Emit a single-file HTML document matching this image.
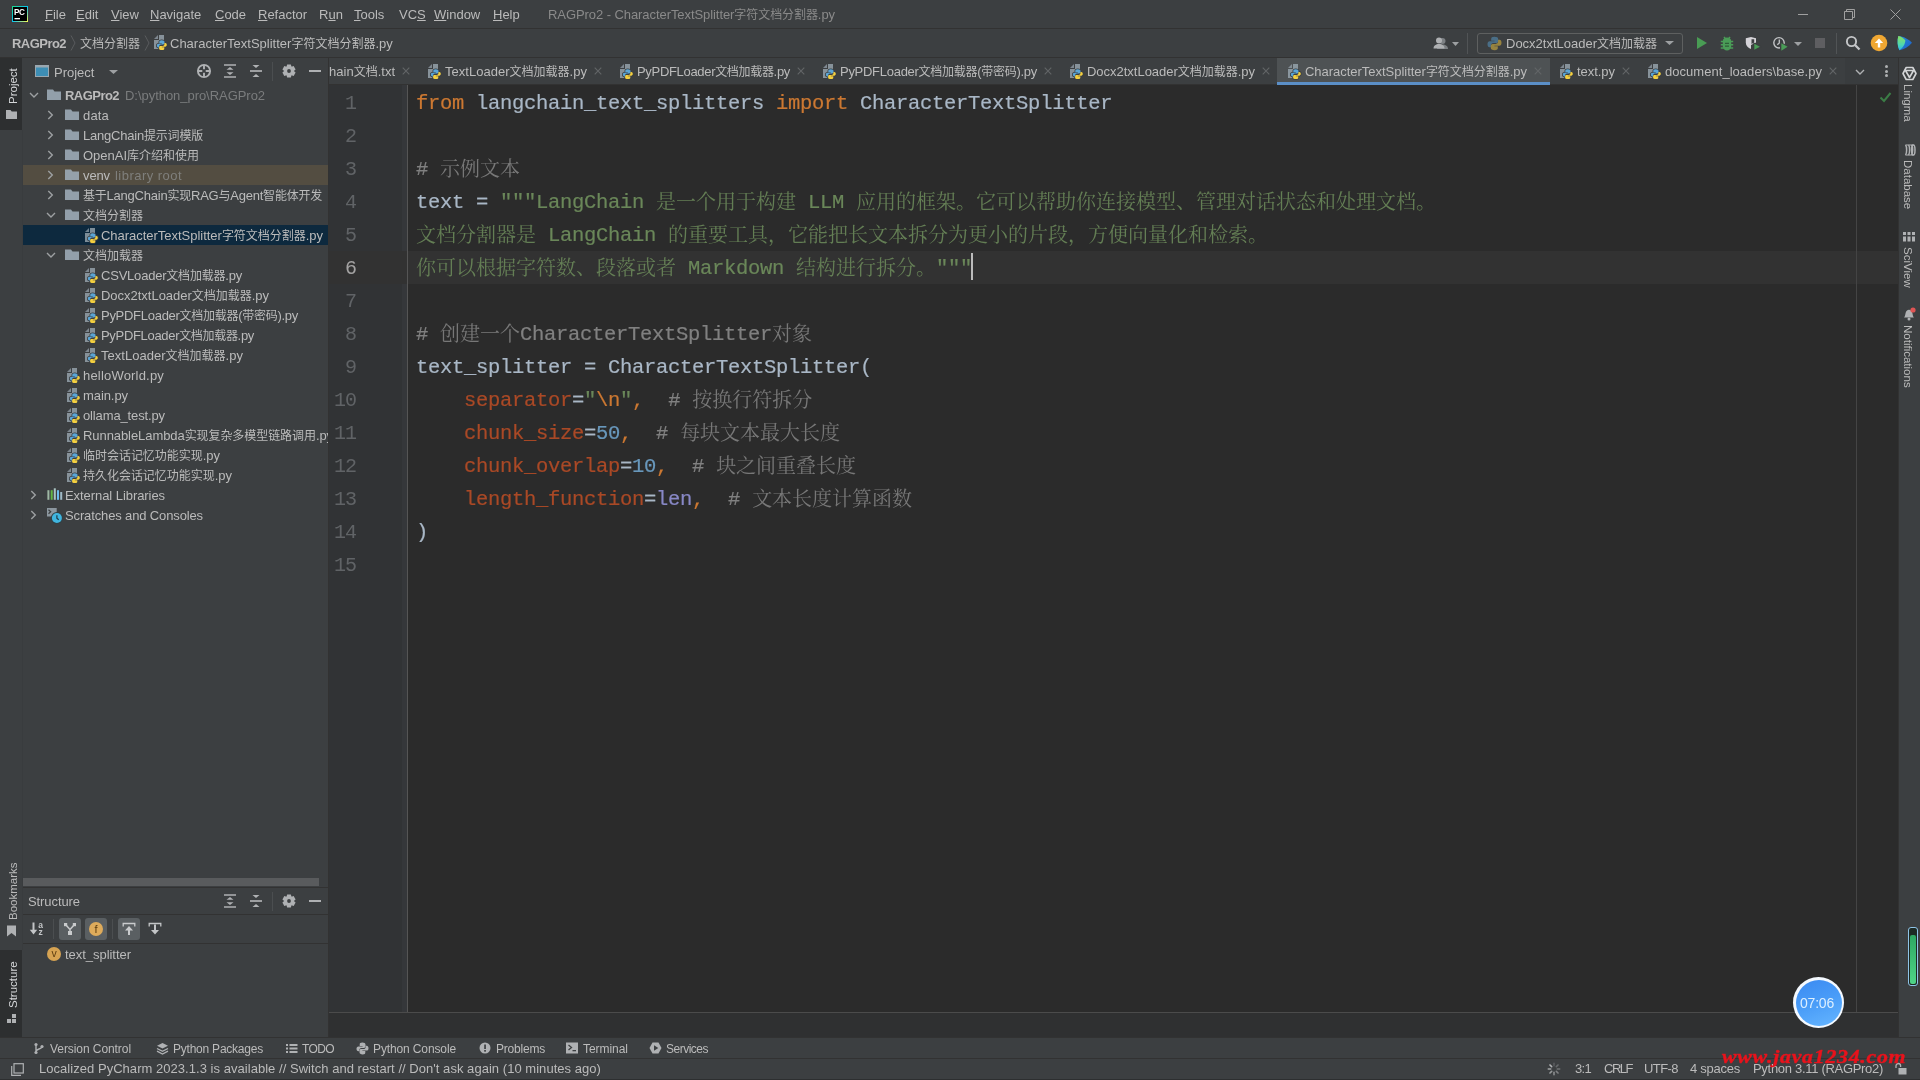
<!DOCTYPE html>
<html lang="zh"><head><meta charset="utf-8"><title>RAGPro2 - CharacterTextSplitter</title>
<style>
*{box-sizing:border-box;margin:0;padding:0}
html,body{width:1920px;height:1080px;overflow:hidden;background:#3c3f41}
body{position:relative;font-family:"Liberation Sans","Noto Sans CJK SC",sans-serif;font-size:13px;color:#bbbbbb}
#root{position:absolute;left:0;top:0;width:1920px;height:1080px;will-change:transform}
.r{position:absolute;display:block}
.t{position:absolute;white-space:pre;font-size:13px;color:#bbbbbb}
.c{font-size:12px}
.b{font-weight:bold}
.dim{color:#8a8a8a}
.code{position:absolute;white-space:pre;font-family:"Liberation Mono","Noto Serif CJK SC",monospace;font-size:20.5px;letter-spacing:-0.3px;height:33px;line-height:33px;color:#a9b7c6;left:416px;-webkit-text-stroke:0.2px}
.code .z{font-family:"Liberation Mono","Noto Serif CJK SC",monospace;font-size:20px;letter-spacing:0;line-height:0;-webkit-text-stroke:0;position:relative;top:1px;opacity:.9}
.ln{position:absolute;font-family:"Liberation Mono",monospace;font-size:20px;letter-spacing:-1px;height:33px;line-height:33px;color:#606366;width:27px;left:329px;text-align:right}
.k{color:#cc7832}.s{color:#6a8759}.cm{color:#808080}.n{color:#6897bb}.p{color:#aa4926}.bi{color:#8888c6}
.vt{position:absolute;white-space:pre;font-size:12px;color:#bbbbbb;height:16px;line-height:16px;transform-origin:0 0}
</style></head><body><div id="root">
<div class="r" style="left:0px;top:28px;width:1920px;height:1px;background:#323232;"></div>
<div class="r" style="left:0px;top:57px;width:1920px;height:1px;background:#323232;"></div>
<div class="r" style="left:0px;top:58px;width:22px;height:979px;background:#3c3f41;"></div>
<div class="r" style="left:22px;top:130px;width:1px;height:820px;background:#393c3e;"></div>
<div class="r" style="left:1898px;top:58px;width:1px;height:979px;background:#323232;"></div>
<div class="r" style="left:328px;top:58px;width:1px;height:979px;background:#323232;"></div>
<div class="r" style="left:329px;top:85px;width:1569px;height:927px;background:#2b2b2b;"></div>
<div class="r" style="left:329px;top:85px;width:78px;height:927px;background:#313335;"></div>
<div class="r" style="left:402px;top:85px;width:5px;height:927px;background:#35373a;"></div>
<div class="r" style="left:407px;top:85px;width:1px;height:927px;background:#555555;"></div>
<div class="r" style="left:329px;top:251px;width:1569px;height:33px;background:#323232;"></div>
<div class="r" style="left:407px;top:251px;width:1px;height:33px;background:#555555;"></div>
<div class="r" style="left:1856px;top:85px;width:1px;height:927px;background:#444444;"></div>
<div class="r" style="left:329px;top:84px;width:1569px;height:1px;background:#323232;"></div>
<div class="r" style="left:329px;top:1012px;width:1569px;height:25px;background:#2f3031;"></div>
<div class="r" style="left:329px;top:1012px;width:1569px;height:1px;background:#4b4b4b;"></div>
<div class="r" style="left:0px;top:1037px;width:1920px;height:1px;background:#323232;"></div>
<div class="r" style="left:0px;top:1058px;width:1920px;height:1px;background:#323232;"></div>
<div class="ln" style="top:87px">1</div>
<div class="ln" style="top:120px">2</div>
<div class="ln" style="top:153px">3</div>
<div class="ln" style="top:186px">4</div>
<div class="ln" style="top:219px">5</div>
<div class="ln" style="top:252px;color:#a4a3a3">6</div>
<div class="ln" style="top:285px">7</div>
<div class="ln" style="top:318px">8</div>
<div class="ln" style="top:351px">9</div>
<div class="ln" style="top:384px">10</div>
<div class="ln" style="top:417px">11</div>
<div class="ln" style="top:450px">12</div>
<div class="ln" style="top:483px">13</div>
<div class="ln" style="top:516px">14</div>
<div class="ln" style="top:549px">15</div>
<div class="code" style="top:87px"><span class="k">from</span> langchain_text_splitters <span class="k">import</span> CharacterTextSplitter</div>
<div class="code" style="top:153px"><span class="cm"># <span class="z">示例文本</span></span></div>
<div class="code" style="top:186px">text = <span class="s">"""LangChain <span class="z">是一个用于构建</span> LLM <span class="z">应用的框架。它可以帮助你连接模型、管理对话状态和处理文档。</span></span></div>
<div class="code" style="top:219px"><span class="s"><span class="z">文档分割器是</span> LangChain <span class="z">的重要工具，它能把长文本拆分为更小的片段，方便向量化和检索。</span></span></div>
<div class="code" style="top:252px"><span class="s"><span class="z">你可以根据字符数、段落或者</span> Markdown <span class="z">结构进行拆分。</span>"""</span></div>
<div class="code" style="top:318px"><span class="cm"># <span class="z">创建一个</span>CharacterTextSplitter<span class="z">对象</span></span></div>
<div class="code" style="top:351px">text_splitter = CharacterTextSplitter(</div>
<div class="code" style="top:384px">    <span class="p">separator</span>=<span class="s">"</span><span class="k">\n</span><span class="s">"</span><span class="k">,</span>  <span class="cm"># <span class="z">按换行符拆分</span></span></div>
<div class="code" style="top:417px">    <span class="p">chunk_size</span>=<span class="n">50</span><span class="k">,</span>  <span class="cm"># <span class="z">每块文本最大长度</span></span></div>
<div class="code" style="top:450px">    <span class="p">chunk_overlap</span>=<span class="n">10</span><span class="k">,</span>  <span class="cm"># <span class="z">块之间重叠长度</span></span></div>
<div class="code" style="top:483px">    <span class="p">length_function</span>=<span class="bi">len</span><span class="k">,</span>  <span class="cm"># <span class="z">文本长度计算函数</span></span></div>
<div class="code" style="top:516px">)</div>
<div class="r" style="left:971px;top:253px;width:2px;height:27px;background:#bbbbbb;"></div>
<svg class="r" style="left:12px;top:6px;" width="16" height="16" viewBox="0 0 16 16"><defs><linearGradient id="pcg" x1="0" y1="0" x2="1" y2="1"><stop offset="0" stop-color="#21d789"/><stop offset=".5" stop-color="#07c3f2"/><stop offset="1" stop-color="#fcf84a"/></linearGradient></defs><rect width="16" height="16" fill="url(#pcg)"/><rect x="1" y="1" width="14" height="14" fill="#000"/><text x="2" y="8.800" font-family="Liberation Sans,sans-serif" font-weight="bold" font-size="8.200" fill="#fff" letter-spacing="-.4">PC</text><rect x="2.500" y="12" width="5.500" height="1.300" fill="#fff"/></svg>
<div class="t " style="left:45px;top:5px;height:20px;line-height:20px;"><u>F</u>ile</div>
<div class="t " style="left:76px;top:5px;height:20px;line-height:20px;"><u>E</u>dit</div>
<div class="t " style="left:111px;top:5px;height:20px;line-height:20px;"><u>V</u>iew</div>
<div class="t " style="left:150px;top:5px;height:20px;line-height:20px;"><u>N</u>avigate</div>
<div class="t " style="left:215px;top:5px;height:20px;line-height:20px;"><u>C</u>ode</div>
<div class="t " style="left:258px;top:5px;height:20px;line-height:20px;"><u>R</u>efactor</div>
<div class="t " style="left:319px;top:5px;height:20px;line-height:20px;">R<u>u</u>n</div>
<div class="t " style="left:354px;top:5px;height:20px;line-height:20px;"><u>T</u>ools</div>
<div class="t " style="left:399px;top:5px;height:20px;line-height:20px;">VC<u>S</u></div>
<div class="t " style="left:434px;top:5px;height:20px;line-height:20px;"><u>W</u>indow</div>
<div class="t " style="left:493px;top:5px;height:20px;line-height:20px;"><u>H</u>elp</div>
<div class="t dim" style="left:548px;top:5px;height:20px;line-height:20px;letter-spacing:-0.072px;">RAGPro2 - CharacterTextSplitter<span class="c">字符文档分割器</span>.py</div>
<div class="r" style="left:1798px;top:14px;width:10px;height:1px;background:#a0a0a0;"></div>
<svg class="r" style="left:1844px;top:9px;" width="11" height="11" viewBox="0 0 11 11"><path d="M.5 2.500h8v8h-8z M2.500 2.500v-2h8v8h-2" fill="none" stroke="#a0a0a0" stroke-width="1"/></svg>
<svg class="r" style="left:1890px;top:9px;" width="11" height="11" viewBox="0 0 11 11"><path d="M.5.5l10 10M10.500.5l-10 10" fill="none" stroke="#a0a0a0" stroke-width="1"/></svg>
<div class="t b" style="left:12px;top:34px;height:20px;line-height:20px;letter-spacing:-0.542px;">RAGPro2</div>
<svg class="r" style="left:70px;top:35px;" width="6" height="16" viewBox="0 0 6 16"><path d="M1 .5L5 8 1 15.500" fill="none" stroke="#595c5e" stroke-width="1"/></svg>
<div class="t " style="left:80px;top:34px;height:20px;line-height:20px;"><span class="c">文档分割器</span></div>
<svg class="r" style="left:144px;top:35px;" width="6" height="16" viewBox="0 0 6 16"><path d="M1 .5L5 8 1 15.500" fill="none" stroke="#595c5e" stroke-width="1"/></svg>
<svg class="r" style="left:151px;top:34px;" width="17" height="17" viewBox="0 0 17 17"><path d="M7 1L3 5h4z" fill="#9aa7b0" opacity=".7"/><path d="M8 1v5H3v9h10V1z" fill="#9aa7b0" opacity=".8"/><circle cx="11" cy="11.200" r="5.600" fill="#3c3f41" opacity=".0"/><g transform="translate(5.800,6.200)"><path d="M4.900.1C3.100.1 2.500.8 2.500 1.800V3H5v.5H1.600C.6 3.500 0 4.300 0 5.400s.6 1.900 1.500 1.900h.9V6c0-.9.8-1.700 1.700-1.700h2.200c.8 0 1.400-.6 1.400-1.400V1.800C7.700.8 6.700.1 4.900.1z" fill="#3c3f41" stroke="#3c3f41" stroke-width="1.600"/><path d="M4.900.1C3.100.1 2.500.8 2.500 1.800V3H5v.5H1.600C.6 3.500 0 4.300 0 5.400s.6 1.900 1.500 1.900h.9V6c0-.9.8-1.700 1.700-1.700h2.200c.8 0 1.400-.6 1.400-1.400V1.800C7.700.8 6.700.1 4.900.1z" transform="rotate(180 5 5)" fill="#3c3f41" stroke="#3c3f41" stroke-width="1.600"/><path d="M4.900.1C3.100.1 2.500.8 2.500 1.800V3H5v.5H1.600C.6 3.500 0 4.300 0 5.400s.6 1.900 1.500 1.900h.9V6c0-.9.8-1.700 1.700-1.700h2.200c.8 0 1.400-.6 1.400-1.400V1.800C7.700.8 6.700.1 4.900.1z" fill="#5aa5d6"/><path d="M4.900.1C3.100.1 2.500.8 2.500 1.800V3H5v.5H1.600C.6 3.500 0 4.300 0 5.400s.6 1.900 1.500 1.900h.9V6c0-.9.8-1.700 1.700-1.700h2.200c.8 0 1.400-.6 1.400-1.400V1.800C7.700.8 6.700.1 4.900.1z" transform="rotate(180 5 5)" fill="#f4d03f"/></g></svg>
<div class="t " style="left:170px;top:34px;height:20px;line-height:20px;">CharacterTextSplitter<span class="c">字符文档分割器</span>.py</div>
<svg class="r" style="left:1433px;top:36px;" width="16" height="16" viewBox="0 0 16 16"><circle cx="9.500" cy="5" r="3" fill="#7d8184"/><path d="M4 13c0-3 2.500-4.500 5.500-4.500S15 10 15 13z" fill="#7d8184"/><circle cx="6" cy="4.500" r="3" fill="#afb1b3"/><path d="M.5 12.500c0-3 2.500-4.500 5.500-4.500s5.500 1.500 5.500 4.500z" fill="#afb1b3"/></svg>
<svg class="r" style="left:1451.5px;top:42px;" width="7" height="4" viewBox="0 0 7 4"><path d="M0 0h7l-3.5 4z" fill="#9da0a2"/></svg>
<div class="r" style="left:1467px;top:33px;width:1px;height:21px;background:#515456;"></div>
<div class="r" style="left:1477px;top:33px;width:206px;height:21px;border:1px solid #5e6060;border-radius:3px;background:#3c3f41"></div>
<svg class="r" style="left:1487px;top:36px;" width="15" height="15" viewBox="0 0 15 15"><path d="M7.300.8C5 .8 4.200 1.600 4.200 3v1.700h3.400v.6H2.700C1.300 5.300.5 6.400.5 8.200s.8 3 2.100 3h1.300V9.400c0-1.300 1.100-2.300 2.400-2.300h3c1.100 0 1.900-.8 1.900-1.900V3c0-1.300-1.300-2.200-3.900-2.200z" fill="#4f7f9f" opacity=".75"/><path d="M7.700 14.200c2.300 0 3.100-.8 3.100-2.200v-1.700H7.400v-.6h4.900c1.400 0 2.200-1.100 2.200-2.900s-.8-3-2.100-3h-1.300v1.800c0 1.300-1.100 2.300-2.400 2.300h-3c-1.100 0-1.900.8-1.900 1.900V12c0 1.300 1.300 2.200 3.900 2.200z" fill="#b59b3f" opacity=".75"/></svg>
<div class="t " style="left:1506px;top:34px;height:20px;line-height:20px;">Docx2txtLoader<span class="c">文档加载器</span></div>
<svg class="r" style="left:1664.5px;top:41px;" width="9" height="4" viewBox="0 0 9 4"><path d="M0 0h9l-4.5 4z" fill="#9da0a2"/></svg>
<svg class="r" style="left:1695px;top:36px;" width="14" height="14" viewBox="0 0 14 14"><path d="M2 1l10 6-10 6z" fill="#499c54"/></svg>
<svg class="r" style="left:1719px;top:35px;" width="16" height="16" viewBox="0 0 16 16"><path d="M5 2l1.800 2.200M11 2L9.200 4.200" stroke="#4a9c57" stroke-width="1.500" fill="none"/><path d="M1.800 6.500h12.400M1.800 9.800h12.400M1.800 13h12.400" stroke="#4a9c57" stroke-width="1.600" fill="none"/><path d="M3.800 6.200c0-2.400 1.900-3.700 4.200-3.700s4.200 1.300 4.200 3.700v5.300c0 2.300-1.900 4-4.200 4s-4.200-1.700-4.200-4z" fill="#4a9c57"/><path d="M6 8.300h4M6 11.200h4" stroke="#2f5f38" stroke-width="1.300"/></svg>
<svg class="r" style="left:1745px;top:35px;" width="18" height="18" viewBox="0 0 18 18"><path d="M.8 3.200L6 2v12C3 13 .8 10.800.8 7.500z" fill="#d5d3d8"/><path d="M6 2l5 1.200v4.300L6 10z" fill="#d5d3d8"/><path d="M6.500 4.200h2.700v3.300L6.500 9z" fill="#3c3f41"/><path d="M8.300 7.200l8.300 4.500-8.300 4.600z" fill="#3c3f41"/><path d="M9.300 8.800l5.600 2.900-5.600 3z" fill="#4a9c57"/></svg>
<svg class="r" style="left:1771px;top:35px;" width="18" height="18" viewBox="0 0 18 18"><circle cx="8" cy="7.800" r="5.200" fill="none" stroke="#c4c6c8" stroke-width="1.400"/><path d="M8.300 4.500v3.500l-2 1.800" fill="none" stroke="#c4c6c8" stroke-width="1.300"/><path d="M9 6.500l9 5-9 5.500z" fill="#3c3f41"/><path d="M10.300 8.300l6.300 3.500-6.300 3.900z" fill="#4a9c57"/></svg>
<svg class="r" style="left:1794.0px;top:42px;" width="8" height="4" viewBox="0 0 8 4"><path d="M0 0h8l-4.0 4z" fill="#9da0a2"/></svg>
<div class="r" style="left:1815px;top:38px;width:10px;height:10px;background:#5e5e61;"></div>
<div class="r" style="left:1836px;top:33px;width:1px;height:21px;background:#515456;"></div>
<svg class="r" style="left:1845px;top:35px;" width="16" height="16" viewBox="0 0 16 16"><circle cx="6.500" cy="6.500" r="4.600" fill="none" stroke="#c4c6c8" stroke-width="1.900"/><path d="M10 10l4.500 4.500" stroke="#c4c6c8" stroke-width="2.300"/></svg>
<svg class="r" style="left:1870px;top:34px;" width="18" height="18" viewBox="0 0 18 18"><circle cx="9" cy="9" r="8.300" fill="#f0a732"/><path d="M9 13.500V8" fill="none" stroke="#fff" stroke-width="2.400"/><path d="M4.800 9L9 4.500 13.200 9z" fill="#fff"/></svg>
<svg class="r" style="left:1896px;top:34px;" width="18" height="18" viewBox="0 0 18 18"><defs><linearGradient id="lg1" x1="0" y1="0" x2="1" y2="1"><stop offset="0" stop-color="#2a8fd8"/><stop offset="1" stop-color="#1b5fc9"/></linearGradient><linearGradient id="lg2" x1="0" y1="0" x2="0" y2="1"><stop offset="0" stop-color="#8be05a"/><stop offset=".6" stop-color="#4fd8b0"/><stop offset="1" stop-color="#2fb5e8"/></linearGradient></defs><path d="M2.300 1.900c5 .3 10.500 3.300 13.700 6.900-3.200 4-8 6.800-12.600 7.400C1.300 12 1.100 6.500 2.300 1.900z" fill="url(#lg1)"/><path d="M2.300 1.900C1.100 6.500 1.300 12 3.400 16.200c3.600-2.400 5.900-6.300 5.900-10-2-2.400-4.400-3.900-7-4.300z" fill="url(#lg2)"/></svg>
<div class="r" style="left:1277px;top:58px;width:273px;height:27px;background:#4e5254;"></div>
<div class="r" style="left:1277px;top:82px;width:273px;height:3px;background:#5b8fc7;"></div>
<div class="r" style="left:329px;top:58px;width:90px;height:26px;overflow:hidden"><div class="t" style="right:24px;top:4px;height:20px;line-height:20px">LangChain<span class="c">文档</span>.txt</div></div>
<svg class="r" style="left:402px;top:67px;" width="8" height="8" viewBox="0 0 8 8"><path d="M.7.7l6.600 6.600M7.300.7L.7 7.300" stroke="#626567" stroke-width="1.100" fill="none"/></svg>
<svg class="r" style="left:425px;top:63px;" width="17" height="17" viewBox="0 0 17 17"><path d="M7 1L3 5h4z" fill="#9aa7b0" opacity=".7"/><path d="M8 1v5H3v9h10V1z" fill="#9aa7b0" opacity=".8"/><circle cx="11" cy="11.200" r="5.600" fill="#3c3f41" opacity=".0"/><g transform="translate(5.800,6.200)"><path d="M4.900.1C3.100.1 2.500.8 2.500 1.800V3H5v.5H1.600C.6 3.500 0 4.300 0 5.400s.6 1.900 1.500 1.900h.9V6c0-.9.8-1.700 1.700-1.700h2.200c.8 0 1.400-.6 1.400-1.400V1.800C7.700.8 6.700.1 4.900.1z" fill="#3c3f41" stroke="#3c3f41" stroke-width="1.600"/><path d="M4.900.1C3.100.1 2.500.8 2.500 1.800V3H5v.5H1.600C.6 3.500 0 4.300 0 5.400s.6 1.900 1.500 1.900h.9V6c0-.9.8-1.700 1.700-1.700h2.200c.8 0 1.400-.6 1.400-1.400V1.800C7.700.8 6.700.1 4.900.1z" transform="rotate(180 5 5)" fill="#3c3f41" stroke="#3c3f41" stroke-width="1.600"/><path d="M4.900.1C3.100.1 2.500.8 2.500 1.800V3H5v.5H1.600C.6 3.500 0 4.300 0 5.400s.6 1.900 1.500 1.900h.9V6c0-.9.8-1.700 1.700-1.700h2.200c.8 0 1.400-.6 1.400-1.400V1.800C7.700.8 6.700.1 4.900.1z" fill="#5aa5d6"/><path d="M4.900.1C3.100.1 2.500.8 2.500 1.800V3H5v.5H1.600C.6 3.500 0 4.300 0 5.400s.6 1.900 1.500 1.900h.9V6c0-.9.8-1.700 1.700-1.700h2.200c.8 0 1.400-.6 1.400-1.400V1.800C7.700.8 6.700.1 4.900.1z" transform="rotate(180 5 5)" fill="#f4d03f"/></g></svg>
<div class="t " style="left:445px;top:62px;height:20px;line-height:20px;letter-spacing:0.017px;">TextLoader<span class="c">文档加载器</span>.py</div>
<svg class="r" style="left:594px;top:67px;" width="8" height="8" viewBox="0 0 8 8"><path d="M.7.7l6.600 6.600M7.300.7L.7 7.300" stroke="#626567" stroke-width="1.100" fill="none"/></svg>
<svg class="r" style="left:617px;top:63px;" width="17" height="17" viewBox="0 0 17 17"><path d="M7 1L3 5h4z" fill="#9aa7b0" opacity=".7"/><path d="M8 1v5H3v9h10V1z" fill="#9aa7b0" opacity=".8"/><circle cx="11" cy="11.200" r="5.600" fill="#3c3f41" opacity=".0"/><g transform="translate(5.800,6.200)"><path d="M4.900.1C3.100.1 2.500.8 2.500 1.800V3H5v.5H1.600C.6 3.500 0 4.300 0 5.400s.6 1.900 1.500 1.900h.9V6c0-.9.8-1.700 1.700-1.700h2.200c.8 0 1.400-.6 1.400-1.400V1.800C7.700.8 6.700.1 4.900.1z" fill="#3c3f41" stroke="#3c3f41" stroke-width="1.600"/><path d="M4.900.1C3.100.1 2.500.8 2.500 1.800V3H5v.5H1.600C.6 3.500 0 4.300 0 5.400s.6 1.900 1.500 1.900h.9V6c0-.9.8-1.700 1.700-1.700h2.200c.8 0 1.400-.6 1.400-1.400V1.800C7.700.8 6.700.1 4.900.1z" transform="rotate(180 5 5)" fill="#3c3f41" stroke="#3c3f41" stroke-width="1.600"/><path d="M4.900.1C3.100.1 2.500.8 2.500 1.800V3H5v.5H1.600C.6 3.500 0 4.300 0 5.400s.6 1.900 1.500 1.900h.9V6c0-.9.8-1.700 1.700-1.700h2.200c.8 0 1.400-.6 1.400-1.400V1.800C7.700.8 6.700.1 4.900.1z" fill="#5aa5d6"/><path d="M4.900.1C3.100.1 2.500.8 2.500 1.800V3H5v.5H1.600C.6 3.500 0 4.300 0 5.400s.6 1.900 1.500 1.900h.9V6c0-.9.8-1.700 1.700-1.700h2.200c.8 0 1.400-.6 1.400-1.400V1.800C7.700.8 6.700.1 4.900.1z" transform="rotate(180 5 5)" fill="#f4d03f"/></g></svg>
<div class="t " style="left:637px;top:62px;height:20px;line-height:20px;letter-spacing:-0.317px;">PyPDFLoader<span class="c">文档加载器</span>.py</div>
<svg class="r" style="left:797px;top:67px;" width="8" height="8" viewBox="0 0 8 8"><path d="M.7.7l6.600 6.600M7.300.7L.7 7.300" stroke="#626567" stroke-width="1.100" fill="none"/></svg>
<svg class="r" style="left:820px;top:63px;" width="17" height="17" viewBox="0 0 17 17"><path d="M7 1L3 5h4z" fill="#9aa7b0" opacity=".7"/><path d="M8 1v5H3v9h10V1z" fill="#9aa7b0" opacity=".8"/><circle cx="11" cy="11.200" r="5.600" fill="#3c3f41" opacity=".0"/><g transform="translate(5.800,6.200)"><path d="M4.900.1C3.100.1 2.500.8 2.500 1.800V3H5v.5H1.600C.6 3.500 0 4.300 0 5.400s.6 1.900 1.500 1.900h.9V6c0-.9.8-1.700 1.700-1.700h2.200c.8 0 1.400-.6 1.400-1.400V1.800C7.700.8 6.700.1 4.900.1z" fill="#3c3f41" stroke="#3c3f41" stroke-width="1.600"/><path d="M4.900.1C3.100.1 2.500.8 2.500 1.800V3H5v.5H1.600C.6 3.500 0 4.300 0 5.400s.6 1.900 1.500 1.900h.9V6c0-.9.8-1.700 1.700-1.700h2.200c.8 0 1.400-.6 1.400-1.400V1.800C7.700.8 6.700.1 4.900.1z" transform="rotate(180 5 5)" fill="#3c3f41" stroke="#3c3f41" stroke-width="1.600"/><path d="M4.900.1C3.100.1 2.500.8 2.500 1.800V3H5v.5H1.600C.6 3.500 0 4.300 0 5.400s.6 1.900 1.500 1.900h.9V6c0-.9.8-1.700 1.700-1.700h2.200c.8 0 1.400-.6 1.400-1.400V1.800C7.700.8 6.700.1 4.900.1z" fill="#5aa5d6"/><path d="M4.900.1C3.100.1 2.500.8 2.500 1.800V3H5v.5H1.600C.6 3.500 0 4.300 0 5.400s.6 1.900 1.500 1.900h.9V6c0-.9.8-1.700 1.700-1.700h2.200c.8 0 1.400-.6 1.400-1.400V1.800C7.700.8 6.700.1 4.900.1z" transform="rotate(180 5 5)" fill="#f4d03f"/></g></svg>
<div class="t " style="left:840px;top:62px;height:20px;line-height:20px;letter-spacing:-0.279px;">PyPDFLoader<span class="c">文档加载器</span>(<span class="c">带密码</span>).py</div>
<svg class="r" style="left:1044px;top:67px;" width="8" height="8" viewBox="0 0 8 8"><path d="M.7.7l6.600 6.600M7.300.7L.7 7.300" stroke="#626567" stroke-width="1.100" fill="none"/></svg>
<svg class="r" style="left:1067px;top:63px;" width="17" height="17" viewBox="0 0 17 17"><path d="M7 1L3 5h4z" fill="#9aa7b0" opacity=".7"/><path d="M8 1v5H3v9h10V1z" fill="#9aa7b0" opacity=".8"/><circle cx="11" cy="11.200" r="5.600" fill="#3c3f41" opacity=".0"/><g transform="translate(5.800,6.200)"><path d="M4.900.1C3.100.1 2.500.8 2.500 1.800V3H5v.5H1.600C.6 3.500 0 4.300 0 5.400s.6 1.900 1.500 1.900h.9V6c0-.9.8-1.700 1.700-1.700h2.200c.8 0 1.400-.6 1.400-1.400V1.800C7.700.8 6.700.1 4.900.1z" fill="#3c3f41" stroke="#3c3f41" stroke-width="1.600"/><path d="M4.900.1C3.100.1 2.500.8 2.500 1.800V3H5v.5H1.600C.6 3.500 0 4.300 0 5.400s.6 1.900 1.500 1.900h.9V6c0-.9.8-1.700 1.700-1.700h2.200c.8 0 1.400-.6 1.400-1.400V1.800C7.700.8 6.700.1 4.900.1z" transform="rotate(180 5 5)" fill="#3c3f41" stroke="#3c3f41" stroke-width="1.600"/><path d="M4.900.1C3.100.1 2.500.8 2.500 1.800V3H5v.5H1.600C.6 3.500 0 4.300 0 5.400s.6 1.900 1.500 1.900h.9V6c0-.9.8-1.700 1.700-1.700h2.200c.8 0 1.400-.6 1.400-1.400V1.800C7.700.8 6.700.1 4.900.1z" fill="#5aa5d6"/><path d="M4.900.1C3.100.1 2.500.8 2.500 1.800V3H5v.5H1.600C.6 3.500 0 4.300 0 5.400s.6 1.900 1.500 1.900h.9V6c0-.9.8-1.700 1.700-1.700h2.200c.8 0 1.400-.6 1.400-1.400V1.800C7.700.8 6.700.1 4.900.1z" transform="rotate(180 5 5)" fill="#f4d03f"/></g></svg>
<div class="t " style="left:1087px;top:62px;height:20px;line-height:20px;letter-spacing:-0.019px;">Docx2txtLoader<span class="c">文档加载器</span>.py</div>
<svg class="r" style="left:1262px;top:67px;" width="8" height="8" viewBox="0 0 8 8"><path d="M.7.7l6.600 6.600M7.300.7L.7 7.300" stroke="#626567" stroke-width="1.100" fill="none"/></svg>
<svg class="r" style="left:1285px;top:63px;" width="17" height="17" viewBox="0 0 17 17"><path d="M7 1L3 5h4z" fill="#9aa7b0" opacity=".7"/><path d="M8 1v5H3v9h10V1z" fill="#9aa7b0" opacity=".8"/><circle cx="11" cy="11.200" r="5.600" fill="#3c3f41" opacity=".0"/><g transform="translate(5.800,6.200)"><path d="M4.900.1C3.100.1 2.500.8 2.500 1.800V3H5v.5H1.600C.6 3.500 0 4.300 0 5.400s.6 1.900 1.500 1.900h.9V6c0-.9.8-1.700 1.700-1.700h2.200c.8 0 1.400-.6 1.400-1.400V1.800C7.700.8 6.700.1 4.900.1z" fill="#3c3f41" stroke="#3c3f41" stroke-width="1.600"/><path d="M4.900.1C3.100.1 2.500.8 2.500 1.800V3H5v.5H1.600C.6 3.500 0 4.300 0 5.400s.6 1.900 1.500 1.900h.9V6c0-.9.8-1.700 1.700-1.700h2.200c.8 0 1.400-.6 1.400-1.400V1.800C7.700.8 6.700.1 4.900.1z" transform="rotate(180 5 5)" fill="#3c3f41" stroke="#3c3f41" stroke-width="1.600"/><path d="M4.900.1C3.100.1 2.500.8 2.500 1.800V3H5v.5H1.600C.6 3.500 0 4.300 0 5.400s.6 1.900 1.500 1.900h.9V6c0-.9.8-1.700 1.700-1.700h2.200c.8 0 1.400-.6 1.400-1.400V1.800C7.700.8 6.700.1 4.900.1z" fill="#5aa5d6"/><path d="M4.900.1C3.100.1 2.500.8 2.500 1.800V3H5v.5H1.600C.6 3.500 0 4.300 0 5.400s.6 1.900 1.500 1.900h.9V6c0-.9.8-1.700 1.700-1.700h2.200c.8 0 1.400-.6 1.400-1.400V1.800C7.700.8 6.700.1 4.900.1z" transform="rotate(180 5 5)" fill="#f4d03f"/></g></svg>
<div class="t " style="left:1305px;top:62px;height:20px;line-height:20px;letter-spacing:-0.024px;">CharacterTextSplitter<span class="c">字符文档分割器</span>.py</div>
<svg class="r" style="left:1534px;top:67px;" width="8" height="8" viewBox="0 0 8 8"><path d="M.7.7l6.600 6.600M7.300.7L.7 7.300" stroke="#626567" stroke-width="1.100" fill="none"/></svg>
<svg class="r" style="left:1557px;top:63px;" width="17" height="17" viewBox="0 0 17 17"><path d="M7 1L3 5h4z" fill="#9aa7b0" opacity=".7"/><path d="M8 1v5H3v9h10V1z" fill="#9aa7b0" opacity=".8"/><circle cx="11" cy="11.200" r="5.600" fill="#3c3f41" opacity=".0"/><g transform="translate(5.800,6.200)"><path d="M4.900.1C3.100.1 2.500.8 2.500 1.800V3H5v.5H1.600C.6 3.500 0 4.300 0 5.400s.6 1.900 1.500 1.900h.9V6c0-.9.8-1.700 1.700-1.700h2.200c.8 0 1.400-.6 1.400-1.400V1.800C7.700.8 6.700.1 4.900.1z" fill="#3c3f41" stroke="#3c3f41" stroke-width="1.600"/><path d="M4.900.1C3.100.1 2.500.8 2.500 1.800V3H5v.5H1.600C.6 3.500 0 4.300 0 5.400s.6 1.900 1.500 1.900h.9V6c0-.9.8-1.700 1.700-1.700h2.200c.8 0 1.400-.6 1.400-1.400V1.800C7.700.8 6.700.1 4.900.1z" transform="rotate(180 5 5)" fill="#3c3f41" stroke="#3c3f41" stroke-width="1.600"/><path d="M4.900.1C3.100.1 2.500.8 2.500 1.800V3H5v.5H1.600C.6 3.500 0 4.300 0 5.400s.6 1.900 1.500 1.900h.9V6c0-.9.8-1.700 1.700-1.700h2.200c.8 0 1.400-.6 1.400-1.400V1.800C7.700.8 6.700.1 4.900.1z" fill="#5aa5d6"/><path d="M4.900.1C3.100.1 2.500.8 2.500 1.800V3H5v.5H1.600C.6 3.500 0 4.300 0 5.400s.6 1.900 1.500 1.900h.9V6c0-.9.8-1.700 1.700-1.700h2.200c.8 0 1.400-.6 1.400-1.400V1.800C7.700.8 6.700.1 4.900.1z" transform="rotate(180 5 5)" fill="#f4d03f"/></g></svg>
<div class="t " style="left:1577px;top:62px;height:20px;line-height:20px;letter-spacing:-0.042px;">text.py</div>
<svg class="r" style="left:1622px;top:67px;" width="8" height="8" viewBox="0 0 8 8"><path d="M.7.7l6.600 6.600M7.300.7L.7 7.300" stroke="#626567" stroke-width="1.100" fill="none"/></svg>
<svg class="r" style="left:1645px;top:63px;" width="17" height="17" viewBox="0 0 17 17"><path d="M7 1L3 5h4z" fill="#9aa7b0" opacity=".7"/><path d="M8 1v5H3v9h10V1z" fill="#9aa7b0" opacity=".8"/><circle cx="11" cy="11.200" r="5.600" fill="#3c3f41" opacity=".0"/><g transform="translate(5.800,6.200)"><path d="M4.900.1C3.100.1 2.500.8 2.500 1.800V3H5v.5H1.600C.6 3.500 0 4.300 0 5.400s.6 1.900 1.500 1.900h.9V6c0-.9.8-1.700 1.700-1.700h2.200c.8 0 1.400-.6 1.400-1.400V1.800C7.700.8 6.700.1 4.900.1z" fill="#3c3f41" stroke="#3c3f41" stroke-width="1.600"/><path d="M4.900.1C3.100.1 2.500.8 2.500 1.800V3H5v.5H1.600C.6 3.500 0 4.300 0 5.400s.6 1.900 1.500 1.900h.9V6c0-.9.8-1.700 1.700-1.700h2.200c.8 0 1.400-.6 1.400-1.400V1.800C7.700.8 6.700.1 4.900.1z" transform="rotate(180 5 5)" fill="#3c3f41" stroke="#3c3f41" stroke-width="1.600"/><path d="M4.900.1C3.100.1 2.500.8 2.500 1.800V3H5v.5H1.600C.6 3.500 0 4.300 0 5.400s.6 1.900 1.500 1.900h.9V6c0-.9.8-1.700 1.700-1.700h2.200c.8 0 1.400-.6 1.400-1.400V1.800C7.700.8 6.700.1 4.900.1z" fill="#5aa5d6"/><path d="M4.900.1C3.100.1 2.500.8 2.500 1.800V3H5v.5H1.600C.6 3.500 0 4.300 0 5.400s.6 1.900 1.500 1.900h.9V6c0-.9.8-1.700 1.700-1.700h2.200c.8 0 1.400-.6 1.400-1.400V1.800C7.700.8 6.700.1 4.900.1z" transform="rotate(180 5 5)" fill="#f4d03f"/></g></svg>
<div class="t " style="left:1665px;top:62px;height:20px;line-height:20px;letter-spacing:0.037px;">document_loaders\base.py</div>
<svg class="r" style="left:1829px;top:67px;" width="8" height="8" viewBox="0 0 8 8"><path d="M.7.7l6.600 6.600M7.300.7L.7 7.300" stroke="#626567" stroke-width="1.100" fill="none"/></svg>
<div class="r" style="left:1845px;top:58px;width:53px;height:26px;background:#393c3e;"></div>
<svg class="r" style="left:1855px;top:68px;" width="10" height="8" viewBox="0 0 10 8"><path d="M1 2l4 4 4-4" fill="none" stroke="#afb1b3" stroke-width="1.400"/></svg>
<div class="r" style="left:1884.500px;top:64.8px;width:3px;height:3px;border-radius:50%;background:#afb1b3"></div>
<div class="r" style="left:1884.500px;top:69.5px;width:3px;height:3px;border-radius:50%;background:#afb1b3"></div>
<div class="r" style="left:1884.500px;top:74.2px;width:3px;height:3px;border-radius:50%;background:#afb1b3"></div>
<svg class="r" style="left:35px;top:64px;" width="14" height="14" viewBox="0 0 14 14"><rect x=".5" y="1.500" width="13" height="11" fill="#3d8eb5" stroke="#9aa7b0" stroke-width="1"/><rect x="0" y="1" width="14" height="2.500" fill="#9aa7b0"/></svg>
<div class="t " style="left:54px;top:63px;height:20px;line-height:20px;">Project</div>
<svg class="r" style="left:108.5px;top:70px;" width="9" height="4" viewBox="0 0 9 4"><path d="M0 0h9l-4.5 4z" fill="#9da0a2"/></svg>
<svg class="r" style="left:196px;top:63px;" width="16" height="16" viewBox="0 0 16 16"><circle cx="8" cy="8" r="6.100" fill="none" stroke="#afb1b3" stroke-width="1.900"/><path d="M8 2v4.300M8 9.700V14M2 8h4.300M9.700 8H14" stroke="#afb1b3" stroke-width="1.900"/></svg>
<svg class="r" style="left:222px;top:63px;" width="16" height="16" viewBox="0 0 16 16"><path d="M2 2h12M2 14h12" stroke="#afb1b3" stroke-width="1.700"/><path d="M4.500 6.800L8 4l3.500 2.800z M4.500 9.200L8 12l3.500-2.800z" fill="#afb1b3"/></svg>
<svg class="r" style="left:248px;top:63px;" width="16" height="16" viewBox="0 0 16 16"><path d="M2 8h12" stroke="#afb1b3" stroke-width="1.700"/><path d="M4.500 2L8 5l3.500-3z M4.500 14L8 11l3.500 3z" fill="#afb1b3"/></svg>
<div class="r" style="left:272px;top:62px;width:1px;height:19px;background:#4b4e50;"></div>
<svg class="r" style="left:281px;top:63px;" width="16" height="16" viewBox="0 0 16 16"><g transform="translate(8,8)"><path d="M-1.900 -6.500h3.800l.7 3h-5.200z" transform="rotate(0)" fill="#afb1b3"/><path d="M-1.900 -6.500h3.800l.7 3h-5.200z" transform="rotate(60)" fill="#afb1b3"/><path d="M-1.900 -6.500h3.800l.7 3h-5.200z" transform="rotate(120)" fill="#afb1b3"/><path d="M-1.900 -6.500h3.800l.7 3h-5.200z" transform="rotate(180)" fill="#afb1b3"/><path d="M-1.900 -6.500h3.800l.7 3h-5.200z" transform="rotate(240)" fill="#afb1b3"/><path d="M-1.900 -6.500h3.800l.7 3h-5.200z" transform="rotate(300)" fill="#afb1b3"/><circle r="3.400" fill="none" stroke="#afb1b3" stroke-width="3"/></g></svg>
<div class="r" style="left:309px;top:70px;width:12px;height:2px;background:#afb1b3;"></div>
<div class="r" style="left:23px;top:165px;width:305px;height:20px;background:#534d41;"></div>
<div class="r" style="left:23px;top:225px;width:305px;height:20px;background:#0d293e;"></div>
<div class="r" style="left:23px;top:85px;width:305px;height:460px;overflow:hidden">
<svg class="r" style="left:6px;top:6px;" width="10" height="8" viewBox="0 0 10 8"><path d="M1 2l4 4 4-4" fill="none" stroke="#9da0a2" stroke-width="1.400"/></svg>
<svg class="r" style="left:23px;top:2px;" width="16" height="16" viewBox="0 0 16 16"><path d="M1 2.500h6l1.500 2H15V13H1z" fill="#9eadb8" opacity=".88"/></svg>
<div class="t b" style="left:42px;top:1px;height:20px;line-height:20px;letter-spacing:-0.542px;">RAGPro2</div>
<svg class="r" style="left:24px;top:25px;" width="8" height="10" viewBox="0 0 8 10"><path d="M1.300 1l4 4-4 4" fill="none" stroke="#9da0a2" stroke-width="1.400"/></svg>
<svg class="r" style="left:41px;top:22px;" width="16" height="16" viewBox="0 0 16 16"><path d="M1 2.500h6l1.500 2H15V13H1z" fill="#9eadb8" opacity=".88"/></svg>
<div class="t " style="left:60px;top:21px;height:20px;line-height:20px;letter-spacing:0.172px;">data</div>
<svg class="r" style="left:24px;top:45px;" width="8" height="10" viewBox="0 0 8 10"><path d="M1.300 1l4 4-4 4" fill="none" stroke="#9da0a2" stroke-width="1.400"/></svg>
<svg class="r" style="left:41px;top:42px;" width="16" height="16" viewBox="0 0 16 16"><path d="M1 2.500h6l1.500 2H15V13H1z" fill="#9eadb8" opacity=".88"/></svg>
<div class="t " style="left:60px;top:41px;height:20px;line-height:20px;letter-spacing:-0.208px;">LangChain<span class="c">提示词模版</span></div>
<svg class="r" style="left:24px;top:65px;" width="8" height="10" viewBox="0 0 8 10"><path d="M1.300 1l4 4-4 4" fill="none" stroke="#9da0a2" stroke-width="1.400"/></svg>
<svg class="r" style="left:41px;top:62px;" width="16" height="16" viewBox="0 0 16 16"><path d="M1 2.500h6l1.500 2H15V13H1z" fill="#9eadb8" opacity=".88"/></svg>
<div class="t " style="left:60px;top:61px;height:20px;line-height:20px;letter-spacing:-0.009px;">OpenAI<span class="c">库介绍和使用</span></div>
<svg class="r" style="left:24px;top:85px;" width="8" height="10" viewBox="0 0 8 10"><path d="M1.300 1l4 4-4 4" fill="none" stroke="#9da0a2" stroke-width="1.400"/></svg>
<svg class="r" style="left:41px;top:82px;" width="16" height="16" viewBox="0 0 16 16"><path d="M1 2.500h6l1.500 2H15V13H1z" fill="#9eadb8" opacity=".88"/></svg>
<div class="t " style="left:60px;top:81px;height:20px;line-height:20px;letter-spacing:-0.117px;">venv</div>
<svg class="r" style="left:24px;top:105px;" width="8" height="10" viewBox="0 0 8 10"><path d="M1.300 1l4 4-4 4" fill="none" stroke="#9da0a2" stroke-width="1.400"/></svg>
<svg class="r" style="left:41px;top:102px;" width="16" height="16" viewBox="0 0 16 16"><path d="M1 2.500h6l1.500 2H15V13H1z" fill="#9eadb8" opacity=".88"/></svg>
<div class="t " style="left:60px;top:101px;height:20px;line-height:20px;letter-spacing:-0.226px;"><span class="c">基于</span>LangChain<span class="c">实现</span>RAG<span class="c">与</span>Agent<span class="c">智能体开发</span></div>
<svg class="r" style="left:23px;top:126px;" width="10" height="8" viewBox="0 0 10 8"><path d="M1 2l4 4 4-4" fill="none" stroke="#9da0a2" stroke-width="1.400"/></svg>
<svg class="r" style="left:41px;top:122px;" width="16" height="16" viewBox="0 0 16 16"><path d="M1 2.500h6l1.500 2H15V13H1z" fill="#9eadb8" opacity=".88"/></svg>
<div class="t " style="left:60px;top:121px;height:20px;line-height:20px;letter-spacing:-0.003px;"><span class="c">文档分割器</span></div>
<svg class="r" style="left:59px;top:142px;" width="17" height="17" viewBox="0 0 17 17"><path d="M7 1L3 5h4z" fill="#9aa7b0" opacity=".7"/><path d="M8 1v5H3v9h10V1z" fill="#9aa7b0" opacity=".8"/><circle cx="11" cy="11.200" r="5.600" fill="#3c3f41" opacity=".0"/><g transform="translate(5.800,6.200)"><path d="M4.900.1C3.100.1 2.500.8 2.500 1.800V3H5v.5H1.600C.6 3.500 0 4.300 0 5.400s.6 1.900 1.500 1.900h.9V6c0-.9.8-1.700 1.700-1.700h2.200c.8 0 1.400-.6 1.400-1.400V1.800C7.700.8 6.700.1 4.900.1z" fill="#3c3f41" stroke="#3c3f41" stroke-width="1.600"/><path d="M4.900.1C3.100.1 2.500.8 2.500 1.800V3H5v.5H1.600C.6 3.500 0 4.300 0 5.400s.6 1.900 1.500 1.900h.9V6c0-.9.8-1.700 1.700-1.700h2.200c.8 0 1.400-.6 1.400-1.400V1.800C7.700.8 6.700.1 4.900.1z" transform="rotate(180 5 5)" fill="#3c3f41" stroke="#3c3f41" stroke-width="1.600"/><path d="M4.900.1C3.100.1 2.500.8 2.500 1.800V3H5v.5H1.600C.6 3.500 0 4.300 0 5.400s.6 1.900 1.500 1.900h.9V6c0-.9.8-1.700 1.700-1.700h2.200c.8 0 1.400-.6 1.400-1.400V1.800C7.700.8 6.700.1 4.900.1z" fill="#5aa5d6"/><path d="M4.900.1C3.100.1 2.500.8 2.500 1.800V3H5v.5H1.600C.6 3.500 0 4.300 0 5.400s.6 1.900 1.500 1.900h.9V6c0-.9.8-1.700 1.700-1.700h2.200c.8 0 1.400-.6 1.400-1.400V1.800C7.700.8 6.700.1 4.900.1z" transform="rotate(180 5 5)" fill="#f4d03f"/></g></svg>
<div class="t " style="left:78px;top:141px;height:20px;line-height:20px;letter-spacing:-0.024px;">CharacterTextSplitter<span class="c">字符文档分割器</span>.py</div>
<svg class="r" style="left:23px;top:166px;" width="10" height="8" viewBox="0 0 10 8"><path d="M1 2l4 4 4-4" fill="none" stroke="#9da0a2" stroke-width="1.400"/></svg>
<svg class="r" style="left:41px;top:162px;" width="16" height="16" viewBox="0 0 16 16"><path d="M1 2.500h6l1.500 2H15V13H1z" fill="#9eadb8" opacity=".88"/></svg>
<div class="t " style="left:60px;top:161px;height:20px;line-height:20px;letter-spacing:-0.003px;"><span class="c">文档加载器</span></div>
<svg class="r" style="left:59px;top:182px;" width="17" height="17" viewBox="0 0 17 17"><path d="M7 1L3 5h4z" fill="#9aa7b0" opacity=".7"/><path d="M8 1v5H3v9h10V1z" fill="#9aa7b0" opacity=".8"/><circle cx="11" cy="11.200" r="5.600" fill="#3c3f41" opacity=".0"/><g transform="translate(5.800,6.200)"><path d="M4.900.1C3.100.1 2.500.8 2.500 1.800V3H5v.5H1.600C.6 3.500 0 4.300 0 5.400s.6 1.900 1.500 1.900h.9V6c0-.9.8-1.700 1.700-1.700h2.200c.8 0 1.400-.6 1.400-1.400V1.800C7.700.8 6.700.1 4.900.1z" fill="#3c3f41" stroke="#3c3f41" stroke-width="1.600"/><path d="M4.900.1C3.100.1 2.500.8 2.500 1.800V3H5v.5H1.600C.6 3.500 0 4.300 0 5.400s.6 1.900 1.500 1.900h.9V6c0-.9.8-1.700 1.700-1.700h2.200c.8 0 1.400-.6 1.400-1.400V1.800C7.700.8 6.700.1 4.900.1z" transform="rotate(180 5 5)" fill="#3c3f41" stroke="#3c3f41" stroke-width="1.600"/><path d="M4.900.1C3.100.1 2.500.8 2.500 1.800V3H5v.5H1.600C.6 3.500 0 4.300 0 5.400s.6 1.900 1.500 1.900h.9V6c0-.9.8-1.700 1.700-1.700h2.200c.8 0 1.400-.6 1.400-1.400V1.800C7.700.8 6.700.1 4.900.1z" fill="#5aa5d6"/><path d="M4.900.1C3.100.1 2.500.8 2.500 1.800V3H5v.5H1.600C.6 3.500 0 4.300 0 5.400s.6 1.900 1.500 1.900h.9V6c0-.9.8-1.700 1.700-1.700h2.200c.8 0 1.400-.6 1.400-1.400V1.800C7.700.8 6.700.1 4.900.1z" transform="rotate(180 5 5)" fill="#f4d03f"/></g></svg>
<div class="t " style="left:78px;top:181px;height:20px;line-height:20px;letter-spacing:-0.210px;">CSVLoader<span class="c">文档加载器</span>.py</div>
<svg class="r" style="left:59px;top:202px;" width="17" height="17" viewBox="0 0 17 17"><path d="M7 1L3 5h4z" fill="#9aa7b0" opacity=".7"/><path d="M8 1v5H3v9h10V1z" fill="#9aa7b0" opacity=".8"/><circle cx="11" cy="11.200" r="5.600" fill="#3c3f41" opacity=".0"/><g transform="translate(5.800,6.200)"><path d="M4.900.1C3.100.1 2.500.8 2.500 1.800V3H5v.5H1.600C.6 3.500 0 4.300 0 5.400s.6 1.900 1.500 1.900h.9V6c0-.9.8-1.700 1.700-1.700h2.200c.8 0 1.400-.6 1.400-1.400V1.800C7.700.8 6.700.1 4.900.1z" fill="#3c3f41" stroke="#3c3f41" stroke-width="1.600"/><path d="M4.900.1C3.100.1 2.500.8 2.500 1.800V3H5v.5H1.600C.6 3.500 0 4.300 0 5.400s.6 1.900 1.500 1.900h.9V6c0-.9.8-1.700 1.700-1.700h2.200c.8 0 1.400-.6 1.400-1.400V1.800C7.700.8 6.700.1 4.900.1z" transform="rotate(180 5 5)" fill="#3c3f41" stroke="#3c3f41" stroke-width="1.600"/><path d="M4.900.1C3.100.1 2.500.8 2.500 1.800V3H5v.5H1.600C.6 3.500 0 4.300 0 5.400s.6 1.900 1.500 1.900h.9V6c0-.9.8-1.700 1.700-1.700h2.200c.8 0 1.400-.6 1.400-1.400V1.800C7.700.8 6.700.1 4.900.1z" fill="#5aa5d6"/><path d="M4.900.1C3.100.1 2.500.8 2.500 1.800V3H5v.5H1.600C.6 3.500 0 4.300 0 5.400s.6 1.900 1.500 1.900h.9V6c0-.9.8-1.700 1.700-1.700h2.200c.8 0 1.400-.6 1.400-1.400V1.800C7.700.8 6.700.1 4.900.1z" transform="rotate(180 5 5)" fill="#f4d03f"/></g></svg>
<div class="t " style="left:78px;top:201px;height:20px;line-height:20px;letter-spacing:-0.019px;">Docx2txtLoader<span class="c">文档加载器</span>.py</div>
<svg class="r" style="left:59px;top:222px;" width="17" height="17" viewBox="0 0 17 17"><path d="M7 1L3 5h4z" fill="#9aa7b0" opacity=".7"/><path d="M8 1v5H3v9h10V1z" fill="#9aa7b0" opacity=".8"/><circle cx="11" cy="11.200" r="5.600" fill="#3c3f41" opacity=".0"/><g transform="translate(5.800,6.200)"><path d="M4.900.1C3.100.1 2.500.8 2.500 1.800V3H5v.5H1.600C.6 3.500 0 4.300 0 5.400s.6 1.900 1.500 1.900h.9V6c0-.9.8-1.700 1.700-1.700h2.200c.8 0 1.400-.6 1.400-1.400V1.800C7.700.8 6.700.1 4.900.1z" fill="#3c3f41" stroke="#3c3f41" stroke-width="1.600"/><path d="M4.900.1C3.100.1 2.500.8 2.500 1.800V3H5v.5H1.600C.6 3.500 0 4.300 0 5.400s.6 1.900 1.500 1.900h.9V6c0-.9.8-1.700 1.700-1.700h2.200c.8 0 1.400-.6 1.400-1.400V1.800C7.700.8 6.700.1 4.900.1z" transform="rotate(180 5 5)" fill="#3c3f41" stroke="#3c3f41" stroke-width="1.600"/><path d="M4.900.1C3.100.1 2.500.8 2.500 1.800V3H5v.5H1.600C.6 3.500 0 4.300 0 5.400s.6 1.900 1.500 1.900h.9V6c0-.9.8-1.700 1.700-1.700h2.200c.8 0 1.400-.6 1.400-1.400V1.800C7.700.8 6.700.1 4.900.1z" fill="#5aa5d6"/><path d="M4.900.1C3.100.1 2.500.8 2.500 1.800V3H5v.5H1.600C.6 3.500 0 4.300 0 5.400s.6 1.900 1.500 1.900h.9V6c0-.9.8-1.700 1.700-1.700h2.200c.8 0 1.400-.6 1.400-1.400V1.800C7.700.8 6.700.1 4.900.1z" transform="rotate(180 5 5)" fill="#f4d03f"/></g></svg>
<div class="t " style="left:78px;top:221px;height:20px;line-height:20px;letter-spacing:-0.279px;">PyPDFLoader<span class="c">文档加载器</span>(<span class="c">带密码</span>).py</div>
<svg class="r" style="left:59px;top:242px;" width="17" height="17" viewBox="0 0 17 17"><path d="M7 1L3 5h4z" fill="#9aa7b0" opacity=".7"/><path d="M8 1v5H3v9h10V1z" fill="#9aa7b0" opacity=".8"/><circle cx="11" cy="11.200" r="5.600" fill="#3c3f41" opacity=".0"/><g transform="translate(5.800,6.200)"><path d="M4.900.1C3.100.1 2.500.8 2.500 1.800V3H5v.5H1.600C.6 3.500 0 4.300 0 5.400s.6 1.900 1.500 1.900h.9V6c0-.9.8-1.700 1.700-1.700h2.200c.8 0 1.400-.6 1.400-1.400V1.800C7.700.8 6.700.1 4.900.1z" fill="#3c3f41" stroke="#3c3f41" stroke-width="1.600"/><path d="M4.900.1C3.100.1 2.500.8 2.500 1.800V3H5v.5H1.600C.6 3.500 0 4.300 0 5.400s.6 1.900 1.500 1.900h.9V6c0-.9.8-1.700 1.700-1.700h2.200c.8 0 1.400-.6 1.400-1.400V1.800C7.700.8 6.700.1 4.900.1z" transform="rotate(180 5 5)" fill="#3c3f41" stroke="#3c3f41" stroke-width="1.600"/><path d="M4.900.1C3.100.1 2.500.8 2.500 1.800V3H5v.5H1.600C.6 3.500 0 4.300 0 5.400s.6 1.900 1.500 1.900h.9V6c0-.9.8-1.700 1.700-1.700h2.200c.8 0 1.400-.6 1.400-1.400V1.800C7.700.8 6.700.1 4.900.1z" fill="#5aa5d6"/><path d="M4.900.1C3.100.1 2.500.8 2.500 1.800V3H5v.5H1.600C.6 3.500 0 4.300 0 5.400s.6 1.900 1.500 1.900h.9V6c0-.9.8-1.700 1.700-1.700h2.200c.8 0 1.400-.6 1.400-1.400V1.800C7.700.8 6.700.1 4.900.1z" transform="rotate(180 5 5)" fill="#f4d03f"/></g></svg>
<div class="t " style="left:78px;top:241px;height:20px;line-height:20px;letter-spacing:-0.317px;">PyPDFLoader<span class="c">文档加载器</span>.py</div>
<svg class="r" style="left:59px;top:262px;" width="17" height="17" viewBox="0 0 17 17"><path d="M7 1L3 5h4z" fill="#9aa7b0" opacity=".7"/><path d="M8 1v5H3v9h10V1z" fill="#9aa7b0" opacity=".8"/><circle cx="11" cy="11.200" r="5.600" fill="#3c3f41" opacity=".0"/><g transform="translate(5.800,6.200)"><path d="M4.900.1C3.100.1 2.500.8 2.500 1.800V3H5v.5H1.600C.6 3.500 0 4.300 0 5.400s.6 1.900 1.500 1.900h.9V6c0-.9.8-1.700 1.700-1.700h2.200c.8 0 1.400-.6 1.400-1.400V1.800C7.700.8 6.700.1 4.900.1z" fill="#3c3f41" stroke="#3c3f41" stroke-width="1.600"/><path d="M4.900.1C3.100.1 2.500.8 2.500 1.800V3H5v.5H1.600C.6 3.500 0 4.300 0 5.400s.6 1.900 1.500 1.900h.9V6c0-.9.8-1.700 1.700-1.700h2.200c.8 0 1.400-.6 1.400-1.400V1.800C7.700.8 6.700.1 4.900.1z" transform="rotate(180 5 5)" fill="#3c3f41" stroke="#3c3f41" stroke-width="1.600"/><path d="M4.900.1C3.100.1 2.500.8 2.500 1.800V3H5v.5H1.600C.6 3.500 0 4.300 0 5.400s.6 1.900 1.500 1.900h.9V6c0-.9.8-1.700 1.700-1.700h2.200c.8 0 1.400-.6 1.400-1.400V1.800C7.700.8 6.700.1 4.900.1z" fill="#5aa5d6"/><path d="M4.900.1C3.100.1 2.500.8 2.500 1.800V3H5v.5H1.600C.6 3.500 0 4.300 0 5.400s.6 1.900 1.500 1.900h.9V6c0-.9.8-1.700 1.700-1.700h2.200c.8 0 1.400-.6 1.400-1.400V1.800C7.700.8 6.700.1 4.900.1z" transform="rotate(180 5 5)" fill="#f4d03f"/></g></svg>
<div class="t " style="left:78px;top:261px;height:20px;line-height:20px;letter-spacing:0.017px;">TextLoader<span class="c">文档加载器</span>.py</div>
<svg class="r" style="left:41px;top:282px;" width="17" height="17" viewBox="0 0 17 17"><path d="M7 1L3 5h4z" fill="#9aa7b0" opacity=".7"/><path d="M8 1v5H3v9h10V1z" fill="#9aa7b0" opacity=".8"/><circle cx="11" cy="11.200" r="5.600" fill="#3c3f41" opacity=".0"/><g transform="translate(5.800,6.200)"><path d="M4.900.1C3.100.1 2.500.8 2.500 1.800V3H5v.5H1.600C.6 3.500 0 4.300 0 5.400s.6 1.900 1.500 1.900h.9V6c0-.9.8-1.700 1.700-1.700h2.200c.8 0 1.400-.6 1.400-1.400V1.800C7.700.8 6.700.1 4.900.1z" fill="#3c3f41" stroke="#3c3f41" stroke-width="1.600"/><path d="M4.900.1C3.100.1 2.500.8 2.500 1.800V3H5v.5H1.600C.6 3.500 0 4.300 0 5.400s.6 1.900 1.500 1.900h.9V6c0-.9.8-1.700 1.700-1.700h2.200c.8 0 1.400-.6 1.400-1.400V1.800C7.700.8 6.700.1 4.900.1z" transform="rotate(180 5 5)" fill="#3c3f41" stroke="#3c3f41" stroke-width="1.600"/><path d="M4.900.1C3.100.1 2.500.8 2.500 1.800V3H5v.5H1.600C.6 3.500 0 4.300 0 5.400s.6 1.900 1.500 1.900h.9V6c0-.9.8-1.700 1.700-1.700h2.200c.8 0 1.400-.6 1.400-1.400V1.800C7.700.8 6.700.1 4.900.1z" fill="#5aa5d6"/><path d="M4.900.1C3.100.1 2.500.8 2.500 1.800V3H5v.5H1.600C.6 3.500 0 4.300 0 5.400s.6 1.900 1.500 1.900h.9V6c0-.9.8-1.700 1.700-1.700h2.200c.8 0 1.400-.6 1.400-1.400V1.800C7.700.8 6.700.1 4.900.1z" transform="rotate(180 5 5)" fill="#f4d03f"/></g></svg>
<div class="t " style="left:60px;top:281px;height:20px;line-height:20px;letter-spacing:0.190px;">helloWorld.py</div>
<svg class="r" style="left:41px;top:302px;" width="17" height="17" viewBox="0 0 17 17"><path d="M7 1L3 5h4z" fill="#9aa7b0" opacity=".7"/><path d="M8 1v5H3v9h10V1z" fill="#9aa7b0" opacity=".8"/><circle cx="11" cy="11.200" r="5.600" fill="#3c3f41" opacity=".0"/><g transform="translate(5.800,6.200)"><path d="M4.900.1C3.100.1 2.500.8 2.500 1.800V3H5v.5H1.600C.6 3.500 0 4.300 0 5.400s.6 1.900 1.500 1.900h.9V6c0-.9.8-1.700 1.700-1.700h2.200c.8 0 1.400-.6 1.400-1.400V1.800C7.700.8 6.700.1 4.900.1z" fill="#3c3f41" stroke="#3c3f41" stroke-width="1.600"/><path d="M4.900.1C3.100.1 2.500.8 2.500 1.800V3H5v.5H1.600C.6 3.500 0 4.300 0 5.400s.6 1.900 1.500 1.900h.9V6c0-.9.8-1.700 1.700-1.700h2.200c.8 0 1.400-.6 1.400-1.400V1.800C7.700.8 6.700.1 4.900.1z" transform="rotate(180 5 5)" fill="#3c3f41" stroke="#3c3f41" stroke-width="1.600"/><path d="M4.900.1C3.100.1 2.500.8 2.500 1.800V3H5v.5H1.600C.6 3.500 0 4.300 0 5.400s.6 1.900 1.500 1.900h.9V6c0-.9.8-1.700 1.700-1.700h2.200c.8 0 1.400-.6 1.400-1.400V1.800C7.700.8 6.700.1 4.900.1z" fill="#5aa5d6"/><path d="M4.900.1C3.100.1 2.500.8 2.500 1.800V3H5v.5H1.600C.6 3.500 0 4.300 0 5.400s.6 1.900 1.500 1.900h.9V6c0-.9.8-1.700 1.700-1.700h2.200c.8 0 1.400-.6 1.400-1.400V1.800C7.700.8 6.700.1 4.900.1z" transform="rotate(180 5 5)" fill="#f4d03f"/></g></svg>
<div class="t " style="left:60px;top:301px;height:20px;line-height:20px;letter-spacing:-0.076px;">main.py</div>
<svg class="r" style="left:41px;top:322px;" width="17" height="17" viewBox="0 0 17 17"><path d="M7 1L3 5h4z" fill="#9aa7b0" opacity=".7"/><path d="M8 1v5H3v9h10V1z" fill="#9aa7b0" opacity=".8"/><circle cx="11" cy="11.200" r="5.600" fill="#3c3f41" opacity=".0"/><g transform="translate(5.800,6.200)"><path d="M4.900.1C3.100.1 2.500.8 2.500 1.800V3H5v.5H1.600C.6 3.500 0 4.300 0 5.400s.6 1.900 1.500 1.900h.9V6c0-.9.8-1.700 1.700-1.700h2.200c.8 0 1.400-.6 1.400-1.400V1.800C7.700.8 6.700.1 4.900.1z" fill="#3c3f41" stroke="#3c3f41" stroke-width="1.600"/><path d="M4.900.1C3.100.1 2.500.8 2.500 1.800V3H5v.5H1.600C.6 3.500 0 4.300 0 5.400s.6 1.900 1.500 1.900h.9V6c0-.9.8-1.700 1.700-1.700h2.200c.8 0 1.400-.6 1.400-1.400V1.800C7.700.8 6.700.1 4.900.1z" transform="rotate(180 5 5)" fill="#3c3f41" stroke="#3c3f41" stroke-width="1.600"/><path d="M4.900.1C3.100.1 2.500.8 2.500 1.800V3H5v.5H1.600C.6 3.500 0 4.300 0 5.400s.6 1.900 1.500 1.900h.9V6c0-.9.8-1.700 1.700-1.700h2.200c.8 0 1.400-.6 1.400-1.400V1.800C7.700.8 6.700.1 4.900.1z" fill="#5aa5d6"/><path d="M4.900.1C3.100.1 2.500.8 2.500 1.800V3H5v.5H1.600C.6 3.500 0 4.300 0 5.400s.6 1.900 1.500 1.900h.9V6c0-.9.8-1.700 1.700-1.700h2.200c.8 0 1.400-.6 1.400-1.400V1.800C7.700.8 6.700.1 4.900.1z" transform="rotate(180 5 5)" fill="#f4d03f"/></g></svg>
<div class="t " style="left:60px;top:321px;height:20px;line-height:20px;letter-spacing:-0.131px;">ollama_test.py</div>
<svg class="r" style="left:41px;top:342px;" width="17" height="17" viewBox="0 0 17 17"><path d="M7 1L3 5h4z" fill="#9aa7b0" opacity=".7"/><path d="M8 1v5H3v9h10V1z" fill="#9aa7b0" opacity=".8"/><circle cx="11" cy="11.200" r="5.600" fill="#3c3f41" opacity=".0"/><g transform="translate(5.800,6.200)"><path d="M4.900.1C3.100.1 2.500.8 2.500 1.800V3H5v.5H1.600C.6 3.500 0 4.300 0 5.400s.6 1.900 1.500 1.900h.9V6c0-.9.8-1.700 1.700-1.700h2.200c.8 0 1.400-.6 1.400-1.400V1.800C7.700.8 6.700.1 4.900.1z" fill="#3c3f41" stroke="#3c3f41" stroke-width="1.600"/><path d="M4.900.1C3.100.1 2.500.8 2.500 1.800V3H5v.5H1.600C.6 3.500 0 4.300 0 5.400s.6 1.900 1.500 1.900h.9V6c0-.9.8-1.700 1.700-1.700h2.200c.8 0 1.400-.6 1.400-1.400V1.800C7.700.8 6.700.1 4.900.1z" transform="rotate(180 5 5)" fill="#3c3f41" stroke="#3c3f41" stroke-width="1.600"/><path d="M4.900.1C3.100.1 2.500.8 2.500 1.800V3H5v.5H1.600C.6 3.500 0 4.300 0 5.400s.6 1.900 1.500 1.900h.9V6c0-.9.8-1.700 1.700-1.700h2.200c.8 0 1.400-.6 1.400-1.400V1.800C7.700.8 6.700.1 4.900.1z" fill="#5aa5d6"/><path d="M4.900.1C3.100.1 2.500.8 2.500 1.800V3H5v.5H1.600C.6 3.500 0 4.300 0 5.400s.6 1.900 1.500 1.900h.9V6c0-.9.8-1.700 1.700-1.700h2.200c.8 0 1.400-.6 1.400-1.400V1.800C7.700.8 6.700.1 4.900.1z" transform="rotate(180 5 5)" fill="#f4d03f"/></g></svg>
<div class="t " style="left:60px;top:341px;height:20px;line-height:20px;letter-spacing:-0.071px;">RunnableLambda<span class="c">实现复杂多模型链路调用</span>.py</div>
<svg class="r" style="left:41px;top:362px;" width="17" height="17" viewBox="0 0 17 17"><path d="M7 1L3 5h4z" fill="#9aa7b0" opacity=".7"/><path d="M8 1v5H3v9h10V1z" fill="#9aa7b0" opacity=".8"/><circle cx="11" cy="11.200" r="5.600" fill="#3c3f41" opacity=".0"/><g transform="translate(5.800,6.200)"><path d="M4.900.1C3.100.1 2.500.8 2.500 1.800V3H5v.5H1.600C.6 3.500 0 4.300 0 5.400s.6 1.900 1.500 1.900h.9V6c0-.9.8-1.700 1.700-1.700h2.200c.8 0 1.400-.6 1.400-1.400V1.800C7.700.8 6.700.1 4.900.1z" fill="#3c3f41" stroke="#3c3f41" stroke-width="1.600"/><path d="M4.900.1C3.100.1 2.500.8 2.500 1.800V3H5v.5H1.600C.6 3.500 0 4.300 0 5.400s.6 1.900 1.500 1.900h.9V6c0-.9.8-1.700 1.700-1.700h2.200c.8 0 1.400-.6 1.400-1.400V1.800C7.700.8 6.700.1 4.900.1z" transform="rotate(180 5 5)" fill="#3c3f41" stroke="#3c3f41" stroke-width="1.600"/><path d="M4.900.1C3.100.1 2.500.8 2.500 1.800V3H5v.5H1.600C.6 3.500 0 4.300 0 5.400s.6 1.900 1.500 1.900h.9V6c0-.9.8-1.700 1.700-1.700h2.200c.8 0 1.400-.6 1.400-1.400V1.800C7.700.8 6.700.1 4.900.1z" fill="#5aa5d6"/><path d="M4.900.1C3.100.1 2.500.8 2.500 1.800V3H5v.5H1.600C.6 3.500 0 4.300 0 5.400s.6 1.900 1.500 1.900h.9V6c0-.9.8-1.700 1.700-1.700h2.200c.8 0 1.400-.6 1.400-1.400V1.800C7.700.8 6.700.1 4.900.1z" transform="rotate(180 5 5)" fill="#f4d03f"/></g></svg>
<div class="t " style="left:60px;top:361px;height:20px;line-height:20px;letter-spacing:-0.028px;"><span class="c">临时会话记忆功能实现</span>.py</div>
<svg class="r" style="left:41px;top:382px;" width="17" height="17" viewBox="0 0 17 17"><path d="M7 1L3 5h4z" fill="#9aa7b0" opacity=".7"/><path d="M8 1v5H3v9h10V1z" fill="#9aa7b0" opacity=".8"/><circle cx="11" cy="11.200" r="5.600" fill="#3c3f41" opacity=".0"/><g transform="translate(5.800,6.200)"><path d="M4.900.1C3.100.1 2.500.8 2.500 1.800V3H5v.5H1.600C.6 3.500 0 4.300 0 5.400s.6 1.900 1.500 1.900h.9V6c0-.9.8-1.700 1.700-1.700h2.200c.8 0 1.400-.6 1.400-1.400V1.800C7.700.8 6.700.1 4.900.1z" fill="#3c3f41" stroke="#3c3f41" stroke-width="1.600"/><path d="M4.900.1C3.100.1 2.500.8 2.500 1.800V3H5v.5H1.600C.6 3.500 0 4.300 0 5.400s.6 1.900 1.500 1.900h.9V6c0-.9.8-1.700 1.700-1.700h2.200c.8 0 1.400-.6 1.400-1.400V1.800C7.700.8 6.700.1 4.900.1z" transform="rotate(180 5 5)" fill="#3c3f41" stroke="#3c3f41" stroke-width="1.600"/><path d="M4.900.1C3.100.1 2.500.8 2.500 1.800V3H5v.5H1.600C.6 3.500 0 4.300 0 5.400s.6 1.900 1.500 1.900h.9V6c0-.9.8-1.700 1.700-1.700h2.200c.8 0 1.400-.6 1.400-1.400V1.800C7.700.8 6.700.1 4.900.1z" fill="#5aa5d6"/><path d="M4.900.1C3.100.1 2.500.8 2.500 1.800V3H5v.5H1.600C.6 3.500 0 4.300 0 5.400s.6 1.900 1.500 1.900h.9V6c0-.9.8-1.700 1.700-1.700h2.200c.8 0 1.400-.6 1.400-1.400V1.800C7.700.8 6.700.1 4.900.1z" transform="rotate(180 5 5)" fill="#f4d03f"/></g></svg>
<div class="t " style="left:60px;top:381px;height:20px;line-height:20px;letter-spacing:-0.026px;"><span class="c">持久化会话记忆功能实现</span>.py</div>
<svg class="r" style="left:7px;top:405px;" width="8" height="10" viewBox="0 0 8 10"><path d="M1.300 1l4 4-4 4" fill="none" stroke="#9da0a2" stroke-width="1.400"/></svg>
<svg class="r" style="left:23px;top:402px;" width="17" height="16" viewBox="0 0 17 16"><rect x="1.400" y="3.200" width="2" height="9.600" fill="#9fb8a5"/><rect x="4.700" y="3.200" width="2" height="9.600" fill="#62b543"/><rect x="7.800" y="1.300" width="2" height="11.500" fill="#a9c4c0"/><rect x="11" y="3.200" width="2" height="9.600" fill="#6cbcee"/><rect x="14.200" y="5" width="2" height="7.800" fill="#9fb8c5"/></svg>
<div class="t " style="left:42px;top:401px;height:20px;line-height:20px;letter-spacing:-0.064px;">External Libraries</div>
<svg class="r" style="left:7px;top:425px;" width="8" height="10" viewBox="0 0 8 10"><path d="M1.300 1l4 4-4 4" fill="none" stroke="#9da0a2" stroke-width="1.400"/></svg>
<svg class="r" style="left:23px;top:422px;" width="17" height="17" viewBox="0 0 17 17"><rect x="1" y="1" width="9.700" height="8.500" fill="#9aa7b0" opacity=".85"/><path d="M2.500 2.800l2.200 2-2.200 2" stroke="#3c3f41" stroke-width="1.200" fill="none"/><circle cx="10.900" cy="11" r="6" fill="#2f4046"/><circle cx="10.900" cy="11" r="5" fill="#40b6e0"/><path d="M10.900 8.300v2.900l1.800 1.600" stroke="#1d3a48" stroke-width="1.200" fill="none"/></svg>
<div class="t " style="left:42px;top:421px;height:20px;line-height:20px;letter-spacing:-0.133px;">Scratches and Consoles</div>
<div class="t dim" style="left:102px;top:1px;height:20px;line-height:20px;letter-spacing:-0.043px;color:#7a7c7d;">D:\python_pro\RAGPro2</div>
<div class="t dim" style="left:92px;top:81px;height:20px;line-height:20px;letter-spacing:0.465px;color:#7f7f7c;">library root</div>
</div>
<div class="r" style="left:23px;top:878px;width:296px;height:8px;background:#595b5d;"></div>
<div class="r" style="left:23px;top:887px;width:305px;height:1px;background:#323232;"></div>
<div class="t " style="left:28px;top:892px;height:20px;line-height:20px;letter-spacing:-0.083px;">Structure</div>
<svg class="r" style="left:222px;top:893px;" width="16" height="16" viewBox="0 0 16 16"><path d="M2 2h12M2 14h12" stroke="#afb1b3" stroke-width="1.700"/><path d="M4.500 6.800L8 4l3.500 2.800z M4.500 9.200L8 12l3.500-2.800z" fill="#afb1b3"/></svg>
<svg class="r" style="left:248px;top:893px;" width="16" height="16" viewBox="0 0 16 16"><path d="M2 8h12" stroke="#afb1b3" stroke-width="1.700"/><path d="M4.500 2L8 5l3.500-3z M4.500 14L8 11l3.500 3z" fill="#afb1b3"/></svg>
<div class="r" style="left:272px;top:892px;width:1px;height:19px;background:#4b4e50;"></div>
<svg class="r" style="left:281px;top:893px;" width="16" height="16" viewBox="0 0 16 16"><g transform="translate(8,8)"><path d="M-1.900 -6.500h3.800l.7 3h-5.200z" transform="rotate(0)" fill="#afb1b3"/><path d="M-1.900 -6.500h3.800l.7 3h-5.200z" transform="rotate(60)" fill="#afb1b3"/><path d="M-1.900 -6.500h3.800l.7 3h-5.200z" transform="rotate(120)" fill="#afb1b3"/><path d="M-1.900 -6.500h3.800l.7 3h-5.200z" transform="rotate(180)" fill="#afb1b3"/><path d="M-1.900 -6.500h3.800l.7 3h-5.200z" transform="rotate(240)" fill="#afb1b3"/><path d="M-1.900 -6.500h3.800l.7 3h-5.200z" transform="rotate(300)" fill="#afb1b3"/><circle r="3.400" fill="none" stroke="#afb1b3" stroke-width="3"/></g></svg>
<div class="r" style="left:309px;top:900px;width:12px;height:2px;background:#afb1b3;"></div>
<div class="r" style="left:23px;top:914px;width:305px;height:1px;background:#323232;"></div>
<div class="r" style="left:23px;top:943px;width:305px;height:1px;background:#323232;"></div>
<svg class="r" style="left:29px;top:921px;" width="17" height="16" viewBox="0 0 17 16"><path d="M4.500 1.500v9" fill="none" stroke="#c3c5c7" stroke-width="2"/><path d="M.8 8.800h7.400L4.500 13.500z" fill="#c3c5c7"/><text x="9.300" y="7" font-family="Liberation Sans,sans-serif" font-size="8.500" font-weight="bold" fill="#c3c5c7">a</text><text x="9.600" y="14" font-family="Liberation Sans,sans-serif" font-size="8.500" font-weight="bold" fill="#c3c5c7">z</text></svg>
<div class="r" style="left:53px;top:919px;width:1px;height:20px;background:#4b4e50;"></div>
<div class="r" style="left:59px;top:918px;width:22px;height:22px;border-radius:3px;background:#5a5f62"></div>
<div class="r" style="left:85px;top:918px;width:22px;height:22px;border-radius:3px;background:#5a5f62"></div>
<div class="r" style="left:118px;top:918px;width:22px;height:22px;border-radius:3px;background:#5a5f62"></div>
<svg class="r" style="left:62px;top:921px;" width="16" height="16" viewBox="0 0 16 16"><path d="M3.500 3.500l4.500 5v2.500M12.500 3.500l-4.500 5" fill="none" stroke="#c9cbcd" stroke-width="1.500"/><rect x="2" y="2" width="3.200" height="3.200" fill="#c9cbcd"/><rect x="10.800" y="2" width="3.200" height="3.200" fill="#c9cbcd"/><rect x="6" y="10" width="4" height="4" fill="#c9cbcd"/></svg>
<svg class="r" style="left:88px;top:921px;" width="16" height="16" viewBox="0 0 16 16"><circle cx="8" cy="8" r="7" fill="#deab5b"/><text x="8" y="11.800" text-anchor="middle" font-family="Liberation Sans,sans-serif" font-size="11" fill="#5a3c10">f</text></svg>
<div class="r" style="left:112px;top:919px;width:1px;height:20px;background:#4b4e50;"></div>
<svg class="r" style="left:121px;top:921px;" width="16" height="16" viewBox="0 0 16 16"><path d="M2.200 5.500V2.500h11.600v3" fill="none" stroke="#c9cbcd" stroke-width="1.300"/><path d="M8 14V8" fill="none" stroke="#c9cbcd" stroke-width="2"/><path d="M4 9.500L8 5l4 4.500z" fill="#c9cbcd"/></svg>
<svg class="r" style="left:147px;top:921px;" width="16" height="16" viewBox="0 0 16 16"><path d="M2.200 5.500V2.500h11.600v3" fill="none" stroke="#c3c5c7" stroke-width="1.300"/><path d="M8 3.500v6" fill="none" stroke="#c3c5c7" stroke-width="2"/><path d="M4 9L8 13.500 12 9z" fill="#c3c5c7"/></svg>
<svg class="r" style="left:46px;top:946px;" width="16" height="16" viewBox="0 0 16 16"><circle cx="8" cy="8" r="7" fill="#d6a352"/><text x="8" y="11.300" text-anchor="middle" font-family="Liberation Sans,sans-serif" font-size="10.500" fill="#5c3d10">v</text></svg>
<div class="t " style="left:65px;top:945px;height:20px;line-height:20px;letter-spacing:-0.037px;">text_splitter</div>
<div class="r" style="left:0px;top:58px;width:22px;height:72px;background:#2d2f30;"></div>
<div class="r" style="left:0px;top:950px;width:22px;height:87px;background:#2d2f30;"></div>
<div class="vt" style="left:4.5px;top:104px;width:38px;transform:rotate(-90deg);color:#d5d7d9;font-size:11.5px;text-align:justify;text-align-last:justify">Project</div>
<svg class="r" style="left:6px;top:110px;" width="11" height="9" viewBox="0 0 11 9"><path d="M0 0h4.500l1.200 1.500H11V9H0z" fill="#afb1b3"/></svg>
<div class="vt" style="left:4.5px;top:920px;width:58px;transform:rotate(-90deg);color:#bbbbbb;font-size:11.5px;text-align:justify;text-align-last:justify">Bookmarks</div>
<svg class="r" style="left:6px;top:925px;" width="11" height="12" viewBox="0 0 11 12"><path d="M1 .5h9v11l-4.500-3.500L1 11.500z" fill="#afb1b3"/></svg>
<div class="vt" style="left:4.5px;top:1008px;width:48px;transform:rotate(-90deg);color:#d5d7d9;font-size:11.5px;text-align:justify;text-align-last:justify">Structure</div>
<svg class="r" style="left:6px;top:1013px;" width="11" height="11" viewBox="0 0 11 11"><rect x="1" y="6" width="4" height="4" fill="#afb1b3"/><rect x="6" y="6" width="4" height="4" fill="#afb1b3"/><rect x="6" y="1" width="4" height="4" fill="#afb1b3"/></svg>
<svg class="r" style="left:1902px;top:66px;" width="15" height="15" viewBox="0 0 15 15"><g fill="none" stroke="#d3d5d7" stroke-width="1.600" stroke-linejoin="round"><path d="M4.200 1.500h6.600l3.200 6-3.200 6H4.200L1 7.500z"/><path d="M3.500 4.500h8L7.500 11.500z"/></g></svg>
<div class="vt" style="left:1915.5px;top:84px;width:38px;transform:rotate(90deg);color:#bbbbbb;font-size:11.5px;text-align:justify;text-align-last:justify">Lingma</div>
<svg class="r" style="left:1903px;top:144px;" width="13" height="12" viewBox="0 0 13 12"><g fill="none" stroke="#afb1b3" stroke-width="1.500"><path d="M2.500 1c1.500 1.500 1.500 8.500 0 10M5.500 1c1.500 1.500 1.500 8.500 0 10M8.500 1c1.500 1.500 1.500 8.500 0 10"/><ellipse cx="10.300" cy="6" rx="1.700" ry="5"/></g><path d="M2.500 1h8M2.500 11h8" stroke="#afb1b3" stroke-width="1.200"/></svg>
<div class="vt" style="left:1915.5px;top:160px;width:48px;transform:rotate(90deg);color:#bbbbbb;font-size:11.5px;text-align:justify;text-align-last:justify">Database</div>
<svg class="r" style="left:1903px;top:231px;" width="12" height="12" viewBox="0 0 12 12"><g fill="#afb1b3"><rect x="0" y="1" width="3" height="3"/><rect x="4.500" y="1" width="3" height="3"/><rect x="9" y="1" width="3" height="3"/><rect x="0" y="5.500" width="3" height="5"/><rect x="4.500" y="5.500" width="3" height="5"/><rect x="9" y="5.500" width="3" height="5"/></g></svg>
<div class="vt" style="left:1915.5px;top:247px;width:39px;transform:rotate(90deg);color:#bbbbbb;font-size:11.5px;text-align:justify;text-align-last:justify">SciView</div>
<svg class="r" style="left:1902px;top:307px;" width="14" height="14" viewBox="0 0 14 14"><path d="M2 10.500c1.500-1 1-4.500 2.500-6.500a3.500 3.500 0 0 1 5 0c1.500 2 1 5.500 2.500 6.500z" fill="#afb1b3"/><circle cx="7" cy="12" r="1.500" fill="#afb1b3"/><circle cx="11" cy="3" r="2.600" fill="#e05555"/></svg>
<div class="vt" style="left:1915.5px;top:325px;width:67px;transform:rotate(90deg);color:#bbbbbb;font-size:11.5px;text-align:justify;text-align-last:justify">Notifications</div>
<svg class="r" style="left:1879px;top:91px;" width="13" height="12" viewBox="0 0 13 12"><path d="M1.500 6.500l3.500 3.500 6.500-8" fill="none" stroke="#3b7d46" stroke-width="2"/></svg>
<svg class="r" style="left:33px;top:1042px;" width="12" height="13" viewBox="0 0 12 13"><circle cx="3" cy="2.500" r="1.600" fill="#afb1b3"/><circle cx="3" cy="10.500" r="1.600" fill="#afb1b3"/><circle cx="9" cy="4.500" r="1.600" fill="#afb1b3"/><path d="M3 2.500v8M9 4.500c0 3-6 2-6 5" fill="none" stroke="#afb1b3" stroke-width="1.400"/></svg>
<div class="t " style="left:50px;top:1039px;height:20px;line-height:20px;letter-spacing:-0.070px;font-size:12px;">Version Control</div>
<svg class="r" style="left:156px;top:1042px;" width="13" height="13" viewBox="0 0 13 13"><path d="M6.500 1l5.500 2.800-5.500 2.800L1 3.800z" fill="#afb1b3"/><path d="M1 6.500l5.500 2.800L12 6.500M1 9.200l5.500 2.800L12 9.200" fill="none" stroke="#afb1b3" stroke-width="1.400"/></svg>
<div class="t " style="left:173px;top:1039px;height:20px;line-height:20px;letter-spacing:-0.227px;font-size:12px;">Python Packages</div>
<svg class="r" style="left:286px;top:1043px;" width="12" height="11" viewBox="0 0 12 11"><g fill="#afb1b3"><rect x="0" y="1" width="2" height="2"/><rect x="3.500" y="1" width="8" height="2"/><rect x="0" y="4.500" width="2" height="2"/><rect x="3.500" y="4.500" width="8" height="2"/><rect x="0" y="8" width="2" height="2"/><rect x="3.500" y="8" width="8" height="2"/></g></svg>
<div class="t " style="left:302px;top:1039px;height:20px;line-height:20px;letter-spacing:-0.613px;font-size:12px;">TODO</div>
<svg class="r" style="left:356px;top:1042px;" width="13" height="13" viewBox="0 0 13 13"><path d="M6.300.6C4.300.6 3.700 1.300 3.700 2.500v1.400h2.900v.5H2.400C1.200 4.400.5 5.300.5 6.800s.7 2.500 1.800 2.500h1.100V7.800c0-1.100.9-1.900 2-1.900h2.500c.9 0 1.600-.7 1.600-1.600V2.500C9.500 1.400 8.400.6 6.300.6z" fill="#afb1b3"/><path d="M6.700 12.400c2 0 2.600-.7 2.600-1.900V9.100H6.400v-.5h4.200c1.200 0 1.900-.9 1.900-2.400s-.7-2.500-1.800-2.500H9.600v1.500c0 1.100-.9 1.900-2 1.900H5.100c-.9 0-1.600.7-1.600 1.600v1.800c0 1.100 1.100 1.900 3.200 1.900z" fill="#afb1b3"/></svg>
<div class="t " style="left:373px;top:1039px;height:20px;line-height:20px;letter-spacing:-0.124px;font-size:12px;">Python Console</div>
<svg class="r" style="left:479px;top:1042px;" width="12" height="12" viewBox="0 0 12 12"><circle cx="6" cy="6" r="5.500" fill="#afb1b3"/><rect x="5.200" y="2.500" width="1.700" height="4.500" fill="#3c3f41"/><rect x="5.200" y="8" width="1.700" height="1.700" fill="#3c3f41"/></svg>
<div class="t " style="left:496px;top:1039px;height:20px;line-height:20px;letter-spacing:-0.211px;font-size:12px;">Problems</div>
<svg class="r" style="left:566px;top:1042px;" width="12" height="12" viewBox="0 0 12 12"><rect x="0" y=".5" width="12" height="11" fill="#afb1b3"/><path d="M2.500 3l3 2.500-3 2.500" fill="none" stroke="#3c3f41" stroke-width="1.300"/><rect x="6.500" y="8" width="3.500" height="1.300" fill="#3c3f41"/></svg>
<div class="t " style="left:583px;top:1039px;height:20px;line-height:20px;letter-spacing:-0.045px;font-size:12px;">Terminal</div>
<svg class="r" style="left:649px;top:1042px;" width="13" height="12" viewBox="0 0 13 12"><path d="M3.500.5h6l3 5.500-3 5.500h-6L.5 6z" fill="#afb1b3"/><path d="M5 3.200l4.300 2.800L5 8.800z" fill="#3c3f41"/></svg>
<div class="t " style="left:666px;top:1039px;height:20px;line-height:20px;letter-spacing:-0.502px;font-size:12px;">Services</div>
<svg class="r" style="left:11px;top:1063px;" width="13" height="13" viewBox="0 0 13 13"><rect x="3" y=".7" width="9.300" height="9.300" fill="none" stroke="#afb1b3" stroke-width="1.200"/><path d="M.7 3v9.300H10" fill="none" stroke="#afb1b3" stroke-width="1.200"/></svg>
<div class="t " style="left:39px;top:1059px;height:20px;line-height:20px;letter-spacing:0.039px;">Localized PyCharm 2023.1.3 is available // Switch and restart // Don't ask again (10 minutes ago)</div>
<svg class="r" style="left:1547px;top:1062px;" width="14" height="14" viewBox="0 0 14 14"><g transform="translate(7,7)"><rect x="-.8" y="-6.500" width="1.600" height="4" rx=".8" transform="rotate(0)" fill="#afb1b3" opacity="0.25"/><rect x="-.8" y="-6.500" width="1.600" height="4" rx=".8" transform="rotate(45)" fill="#afb1b3" opacity="0.36"/><rect x="-.8" y="-6.500" width="1.600" height="4" rx=".8" transform="rotate(90)" fill="#afb1b3" opacity="0.46"/><rect x="-.8" y="-6.500" width="1.600" height="4" rx=".8" transform="rotate(135)" fill="#afb1b3" opacity="0.57"/><rect x="-.8" y="-6.500" width="1.600" height="4" rx=".8" transform="rotate(180)" fill="#afb1b3" opacity="0.68"/><rect x="-.8" y="-6.500" width="1.600" height="4" rx=".8" transform="rotate(225)" fill="#afb1b3" opacity="0.79"/><rect x="-.8" y="-6.500" width="1.600" height="4" rx=".8" transform="rotate(270)" fill="#afb1b3" opacity="0.89"/><rect x="-.8" y="-6.500" width="1.600" height="4" rx=".8" transform="rotate(315)" fill="#afb1b3" opacity="1.00"/></g></svg>
<div class="t " style="left:1575px;top:1059px;height:20px;line-height:20px;letter-spacing:-0.693px;">3:1</div>
<div class="t " style="left:1604px;top:1059px;height:20px;line-height:20px;letter-spacing:-1.488px;">CRLF</div>
<div class="t " style="left:1644px;top:1059px;height:20px;line-height:20px;letter-spacing:-0.569px;">UTF-8</div>
<div class="t " style="left:1690px;top:1059px;height:20px;line-height:20px;letter-spacing:-0.256px;">4 spaces</div>
<div class="t " style="left:1753px;top:1059px;height:20px;line-height:20px;letter-spacing:-0.301px;">Python 3.11 (RAGPro2)</div>
<svg class="r" style="left:1894px;top:1062px;" width="13" height="13" viewBox="0 0 13 13"><path d="M2 6V3.800a2.300 2.300 0 0 1 4.600 0V5" fill="none" stroke="#afb1b3" stroke-width="1.300"/><rect x="4.500" y="6" width="8" height="6.500" fill="#afb1b3"/></svg>
<div class="r" style="left:1793px;top:977px;width:51px;height:51px;border-radius:50%;background:#f4f9ff"></div>
<div class="r" style="left:1795.500px;top:979.500px;width:46px;height:46px;border-radius:50%;background:linear-gradient(160deg,#3a8af2 0%,#4a9df8 50%,#66b6ff 100%)"></div>
<div class="t " style="left:1800px;top:993px;height:20px;line-height:20px;letter-spacing:-0.209px;color:#dcefff;font-size:14px;">07:06</div>
<div class="r" style="left:1908px;top:927px;width:10px;height:59px;border:1px solid #8fc4e8;border-radius:3px;background:#1d2a24"></div>
<div class="r" style="left:1910px;top:935px;width:6px;height:49px;border-radius:2px;background:linear-gradient(#2ea862,#4fd487)"></div>
<div class="r" style="left:1722px;top:1045px;width:166px;height:24px;line-height:24px;font-family:'Liberation Serif',serif;font-style:italic;font-weight:bold;font-size:18.500px;color:#e8131c;white-space:pre;letter-spacing:.62px;transform-origin:0 50%;transform:scaleX(1.18);-webkit-text-stroke:.4px #e8131c">www.java1234.com</div>
<div class="r" style="left:0px;top:1079px;width:1920px;height:1px;background:#2d2f30;"></div>
</div></body></html>
